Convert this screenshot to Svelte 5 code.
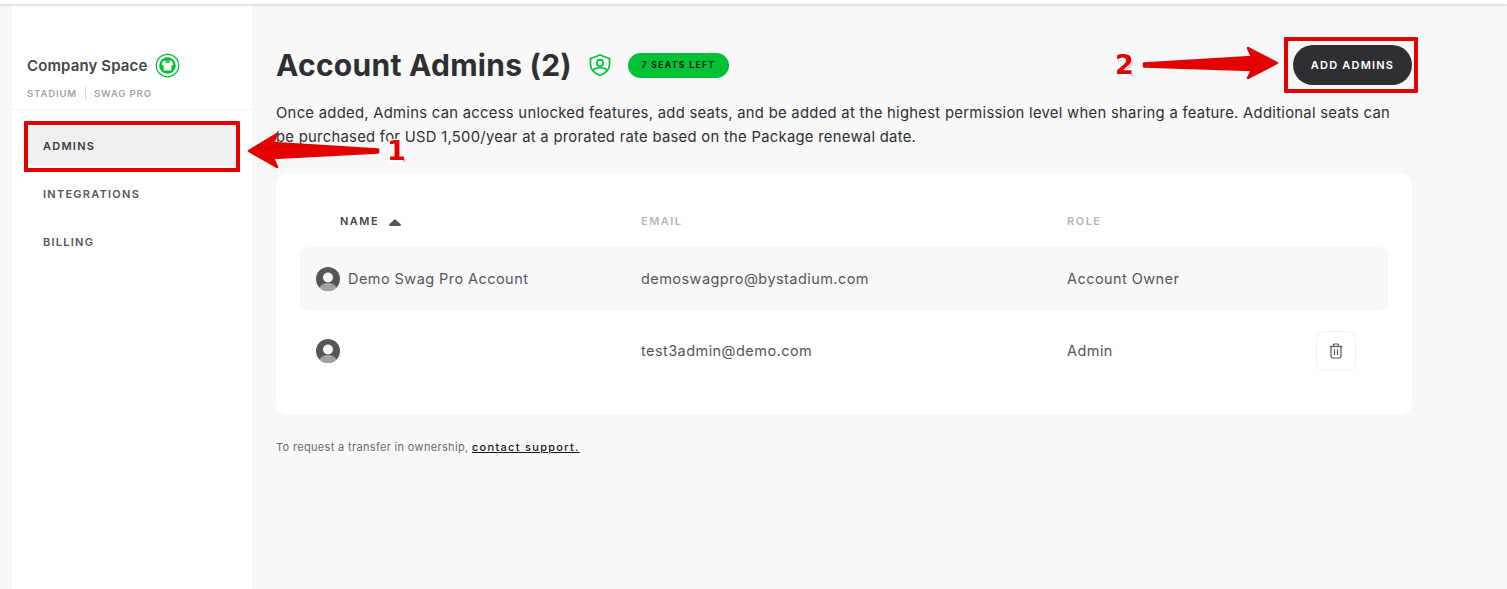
<script>
  const nav = ['ADMINS', 'INTEGRATIONS', 'BILLING'];
  const rows = [
    { name: 'Demo Swag Pro Account', email: 'demoswagpro@bystadium.com', role: 'Account Owner', shaded: true },
    { name: '', email: 'test3admin@demo.com', role: 'Admin', removable: true }
  ];
</script>

<div class="page">
  <div class="topbar"></div>
  <div class="shell">
    <aside class="sidebar">
      <div class="space">
        <div class="space-title">
          <span>Company Space</span>
          <svg class="space-icon" viewBox="0 0 26 26" width="25" height="25">
            <circle cx="13" cy="13" r="11.7" fill="none" stroke="#00c234" stroke-width="1.3" />
            <circle cx="13" cy="13" r="8.6" fill="#00c234" />
            <path d="M10.3 7.6 L8 8.9 L6.9 12.2 L9 13 L9 18.2 L17 18.2 L17 13 L19.1 12.2 L18 8.9 L15.7 7.6 Q13 9.6 10.3 7.6 Z" fill="#fff" />
            <path d="M10.6 7.8 Q13 10 15.4 7.8 L15 9.8 Q13 11 11 9.8 Z" fill="#00c234" />
          </svg>
        </div>
        <div class="space-meta"><span>STADIUM</span><i></i><span>SWAG PRO</span></div>
      </div>
      <nav>
        {#each nav as item, i}
          <div class="nav-item" class:active={i === 0}>{item}</div>
        {/each}
      </nav>
    </aside>

    <main>
      <header>
        <h1>Account Admins (2)</h1>
        <svg class="shield" viewBox="0 0 24 24" width="24" height="24">
          <path d="M12 2 L21.5 5.5 V12 C21.5 17 17 20.5 12 22.5 C7 20.5 2.500 17 2.500 12 V5.500 Z" fill="none" stroke="#00c234" stroke-width="1.700" stroke-linejoin="round" />
          <circle cx="12" cy="10" r="3.200" fill="none" stroke="#00c234" stroke-width="1.700" />
          <path d="M5 16.500 Q12 13 19 16.500" fill="none" stroke="#00c234" stroke-width="1.700" />
        </svg>
        <span class="seats">7 SEATS LEFT</span>
        <button class="add">ADD ADMINS</button>
      </header>
      <p class="intro">Once added, Admins can access unlocked features, add seats, and be added at the highest permission level when sharing a feature. Additional seats can be purchased for USD 1,500/year at a prorated rate based on the Package renewal date.</p>

      <section class="card">
        <div class="row head">
          <div class="name-head">NAME <svg viewBox="0 0 12 7" width="12" height="7"><path d="M6 0 L12 5.500 Q12 7 10.500 7 H1.500 Q0 7 0 5.500 Z" fill="#55565a" /></svg></div>
          <div>EMAIL</div>
          <div>ROLE</div>
          <div></div>
        </div>
        {#each rows as r}
          <div class="row body" class:shaded={r.shaded}>
            <div class="who">
              <svg viewBox="0 0 24 24" width="24" height="24">
                <defs><clipPath id="c"><circle cx="12" cy="12" r="12" /></clipPath></defs>
                <circle cx="12" cy="12" r="12" fill="#55565a" />
                <circle cx="12" cy="10.500" r="5" fill="#fff" />
                <ellipse cx="12" cy="23" rx="9" ry="7" fill="#a3a3a5" clip-path="url(#c)" />
              </svg>
              <span>{r.name}</span>
            </div>
            <div class="cell">{r.email}</div>
            <div class="cell">{r.role}</div>
            <div class="act">
              {#if r.removable}
                <button class="trash" aria-label="Delete">
                  <svg viewBox="0 0 16 16" width="16" height="16" fill="none" stroke="#55565a" stroke-width="1.200">
                    <path d="M1.500 3.500 H14.500" />
                    <path d="M5.500 3.500 V2 Q5.500 1 6.500 1 H9.500 Q10.500 1 10.500 2 V3.500" />
                    <path d="M3 3.500 V13.500 Q3 15 4.500 15 H11.500 Q13 15 13 13.500 V3.500" />
                    <path d="M6.500 6.500 V12 M9.500 6.500 V12" />
                  </svg>
                </button>
              {/if}
            </div>
          </div>
        {/each}
      </section>

      <p class="foot">To request a transfer in ownership, <a href="#top">contact support.</a></p>
    </main>
  </div>

  <div class="box box1"></div>
  <div class="box box2"></div>
  <svg class="arrows" width="1507" height="589" viewBox="0 0 1507 589">
    <path d="M249 151 L277 134 L273 143 L378 149.500 L378 152.500 L273 158 L277 167 Z" fill="#e30000" stroke="#e30000" stroke-width="2.500" stroke-linejoin="round" />
    <path d="M1277 63 L1248 48 L1252 57 L1144 63.500 L1144 66.500 L1252 70 L1248 78 Z" fill="#e30000" stroke="#e30000" stroke-width="2.500" stroke-linejoin="round" />
  </svg>
  <span class="num n1">1</span>
  <span class="num n2">2</span>
</div>

<style>
  :global(body) { margin: 0; background: #f8f8f8; }
  .page { position: relative; width: 1507px; height: 589px; overflow: hidden; background: #f8f8f8; font-family: "Inter", "Liberation Sans", sans-serif; color: #2e2f33; }
  .topbar { height: 4px; background: #fff; box-shadow: 0 1px 3px rgba(60, 60, 90, .25); position: relative; z-index: 1; }
  .shell { display: flex; padding-left: 12px; height: 585px; }
  .sidebar { width: 240px; background: #fff; flex: none; }
  .space { height: 106px; box-sizing: border-box; padding: 49px 0 0 15px; border-bottom: 1px solid #f0f0f1; }
  .space-title { display: flex; align-items: center; gap: 8px; font-size: 15px; font-weight: 600; color: #444549; letter-spacing: .12px; height: 24px; }
  .space-meta { display: flex; align-items: center; margin-top: 9px; font-size: 9.500px; font-weight: 600; letter-spacing: .88px; color: #a3a4a7; }
  .space-meta i { width: 1px; height: 14px; background: #d9d9da; margin: 0 8px; }
  nav { padding: 16px 12px 0 16px; display: flex; flex-direction: column; gap: 8px; }
  .nav-item { height: 40px; padding-left: 15px; display: flex; align-items: center; font-size: 11px; font-weight: 600; letter-spacing: 1.250px; color: #55565a; border-radius: 6px; }
  .nav-item.active { background: #eff0f2; color: #3a3b3f; }
  main { flex: 1; padding: 0 24px; min-width: 0; }
  header { display: flex; align-items: center; height: 44px; margin-top: 39px; width: 1136px; position: relative; }
  h1 { margin: 0; font-size: 30px; font-weight: 700; letter-spacing: .27px; color: #2e2f33; }
  .shield { margin-left: 16px; }
  .seats { margin-left: 16px; background: #00c234; border-radius: 13px; height: 25px; width: 101px; display: flex; align-items: center; justify-content: center; font-size: 8.500px; font-weight: 700; letter-spacing: 1.400px; color: #1c1d20; }
  .add { margin-left: auto; width: 119px; height: 40px; border-radius: 20px; border: none; background: #2e2f33; color: #fff; font: 600 11px "Inter", sans-serif; letter-spacing: 1.200px; }
  .intro { margin: 14px 0 0; width: 1130px; font-size: 14.800px; line-height: 24px; letter-spacing: .285px; color: #2e2f33; }
  .card { margin-top: 24px; width: 1136px; height: 242px; box-sizing: border-box; background: #fff; border-radius: 12px; padding: 24px; }
  .row { display: grid; grid-template-columns: 341px 426px 249px 72px; align-items: center; }
  .head { height: 48px; font-size: 11px; font-weight: 600; letter-spacing: 1.500px; color: #b5b6b8; }
  .name-head { padding-left: 40px; color: #444549; display: flex; align-items: center; gap: 10px; }
  .name-head svg { margin-top: 2px; }
  .body { height: 64px; margin-top: 8px; font-size: 14.500px; letter-spacing: .44px; color: #55565a; border-radius: 8px; }
  .head + .body { margin-top: 2px; }
  .shaded { background: #f8f8f8; }
  .who { display: flex; align-items: center; gap: 8px; padding-left: 16px; }
  .who span, .cell { position: relative; top: -1px; }
  .act { display: flex; }
  .trash { width: 40px; height: 40px; padding: 0; background: #fff; border: 1px solid #efeff0; border-radius: 8px; display: flex; align-items: center; justify-content: center; }
  .foot { margin: 24px 0 0; font-size: 11px; line-height: 16px; letter-spacing: .33px; color: #6b6c70; }
  .foot a { color: #17181b; letter-spacing: 1.300px; font-weight: 500; }
  .box { position: absolute; border: 4px solid #e30000; box-sizing: border-box; border-radius: 1px; }
  .box1 { left: 24px; top: 121px; width: 216px; height: 51px; }
  .box2 { left: 1284px; top: 37px; width: 134px; height: 56px; }
  .arrows { position: absolute; left: 0; top: 0; pointer-events: none; }
  .num { position: absolute; font: 700 27px "DejaVu Sans", sans-serif; color: #e30000; line-height: 30px; text-shadow: -1.500px -1.500px 0 #fff, 1.500px -1.500px 0 #fff, -1.500px 1.500px 0 #fff, 1.500px 1.500px 0 #ccc, 0 2px 0 #ccc; }
  .n1 { left: 387px; top: 136px; }
  .n2 { left: 1115px; top: 50px; }
</style>
